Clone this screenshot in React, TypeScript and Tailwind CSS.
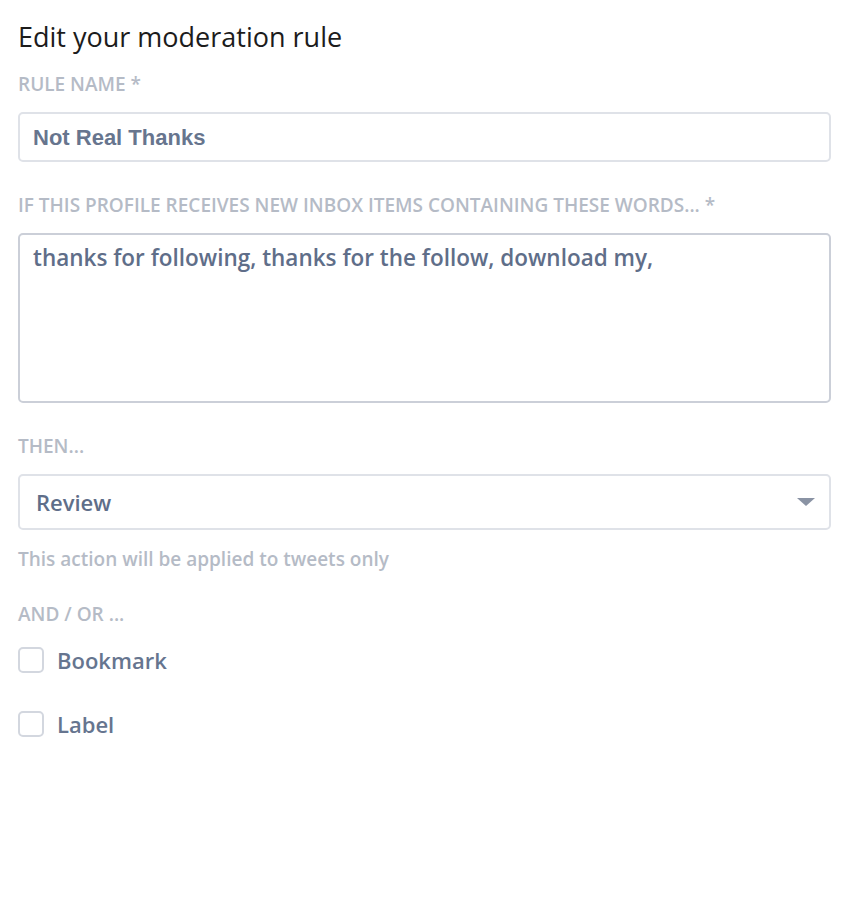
import { useState } from 'react';

const label = "font-['Open_Sans',sans-serif] text-[19px] font-semibold uppercase text-[#b5bbc6] leading-none";

function Check({ text }: { text: string }) {
  const [on, setOn] = useState(false);
  return (
    <label className="flex items-center gap-[13px] cursor-pointer">
      <span
        onClick={() => setOn(!on)}
        className="w-[26px] h-[26px] rounded-[5px] border-2 border-[#d3d7df] bg-white"
      />
      <span className="font-['Open_Sans',sans-serif] text-[22px] leading-[26px] font-semibold text-[#66758f]">{text}</span>
    </label>
  );
}

export default function App() {
  return (
    <div className="bg-white min-h-[912px] pl-[18px] pr-[33px] pt-[23px]">
      <h1 className="font-['Open_Sans',sans-serif] text-[27px] font-normal text-[#1c1c1c] leading-none">
        Edit your moderation rule
      </h1>

      <div className={`${label} mt-[25px]`}>Rule name *</div>
      <div className="mt-[18px] h-[50px] rounded-[5px] border-2 border-[#dfe2e8] flex items-center px-[13px]">
        <span className="font-['Liberation_Sans',Arial,sans-serif] text-[22px] font-bold text-[#67758e]">Not Real Thanks</span>
      </div>

      <div className={`${label} mt-[34px]`}>If this profile receives new inbox items containing these words... *</div>
      <div className="mt-[18px] h-[170px] rounded-[5px] border-2 border-[#cbcfd8] px-[13px] pt-[12px]">
        <div className="font-['Open_Sans',sans-serif] text-[22.5px] leading-[22px] font-semibold text-[#5f6e89]">
          thanks for following, thanks for the follow, download my,
        </div>
      </div>

      <div className={`${label} mt-[34px]`}>Then...</div>
      <div className="mt-[18px] h-[56px] rounded-[5px] border-2 border-[#dfe2e8] flex items-center justify-between pl-[16px] pr-[14px]">
        <span className="font-['Open_Sans',sans-serif] text-[22px] font-semibold text-[#5f6e89]">Review</span>
        <svg width="18" height="9" viewBox="0 0 18 9"><path d="M0 0h18L9 8z" fill="#8a93a4" /></svg>
      </div>

      <div className="mt-[20px] font-['Open_Sans',sans-serif] text-[19px] leading-none font-semibold text-[#b5bbc6]">
        This action will be applied to tweets only
      </div>

      <div className={`${label} mt-[36px]`}>And / Or ...</div>
      <div className="mt-[23px] flex flex-col gap-[38px]">
        <Check text="Bookmark" />
        <Check text="Label" />
      </div>
    </div>
  );
}
